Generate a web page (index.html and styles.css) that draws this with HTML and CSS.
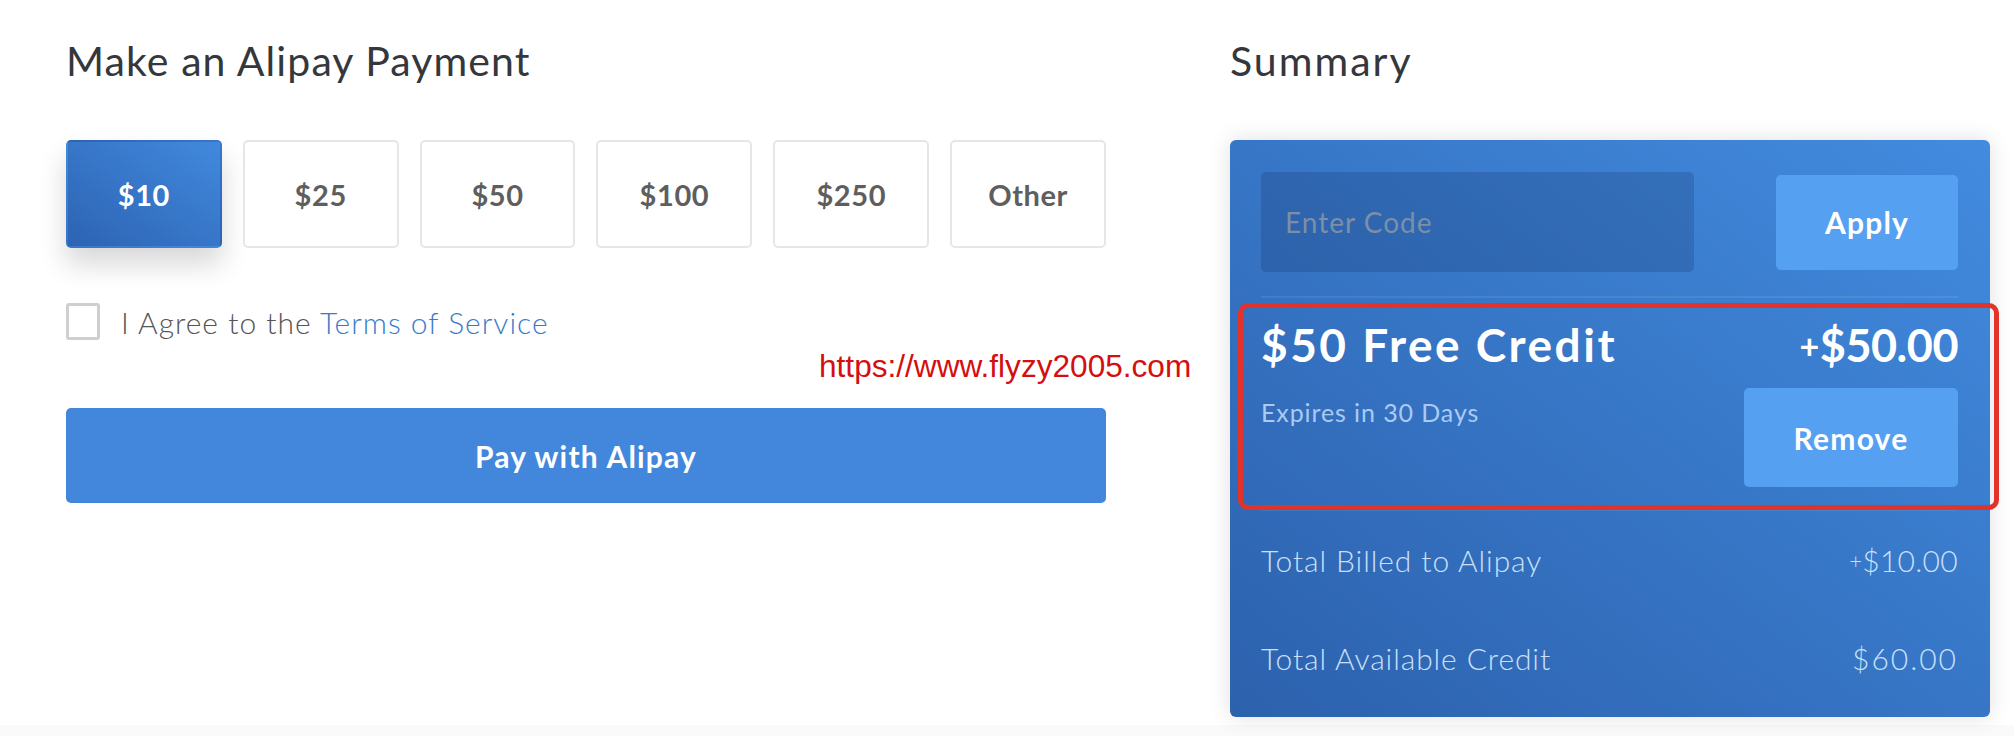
FILE: index.html
```html
<!DOCTYPE html>
<html lang="en">
<head>
<meta charset="utf-8">
<title>Make an Alipay Payment</title>
<link rel="stylesheet" href="styles.css">
</head>
<body>
<main class="page">
  <section class="pay">
    <h1 class="heading">Make an Alipay Payment</h1>
    <div class="amounts">
      <button class="amount is-active">$10</button>
      <button class="amount">$25</button>
      <button class="amount">$50</button>
      <button class="amount">$100</button>
      <button class="amount">$250</button>
      <button class="amount">Other</button>
    </div>
    <label class="agree">
      <span class="check"></span>
      <span class="agree-text">I Agree to the <a class="link" href="#">Terms of Service</a></span>
    </label>
    <span class="watermark">https://www.flyzy2005.com</span>
    <button class="pay-btn">Pay with Alipay</button>
  </section>

  <aside class="summary">
    <h2 class="heading heading-wide">Summary</h2>
    <div class="card">
      <div class="code-row">
        <div class="code-input">Enter Code</div>
        <button class="card-btn apply">Apply</button>
      </div>
      <div class="credit">
        <div class="credit-title">$50 Free Credit</div>
        <div class="credit-amount"><span class="plus">+</span>$50.00</div>
        <div class="credit-note">Expires in 30 Days</div>
        <button class="card-btn remove">Remove</button>
        <span class="highlight"></span>
      </div>
      <div class="total-row">
        <span class="total-label">Total Billed to Alipay</span>
        <span class="total-value"><span class="plus-small">+</span>$10.00</span>
      </div>
      <div class="total-row">
        <span class="total-label">Total Available Credit</span>
        <span class="total-value total-wide">$60.00</span>
      </div>
    </div>
  </aside>
</main>
<div class="footer-band"></div>
</body>
</html>
```

FILE: styles.css
```css
* { box-sizing: border-box; }

html, body {
  margin: 0;
  padding: 0;
  background: #ffffff;
  font-family: "Lato", "Open Sans", sans-serif;
}

.page {
  display: flex;
  gap: 124px;
  padding: 0 24px 8px 66px;
  height: 725px;
}

.pay {
  position: relative;
  width: 1040px;
  flex: none;
}

.summary {
  width: 760px;
  flex: none;
}

.heading {
  margin: 36px 0 55px;
  font-size: 41px;
  line-height: 49px;
  font-weight: 400;
  letter-spacing: 1.1px;
  color: #34373b;
}

.heading-wide {
  letter-spacing: 2px;
}

.amounts {
  display: grid;
  grid-template-columns: repeat(6, 1fr);
  gap: 21px;
}

.amount {
  height: 108px;
  border: 2px solid #e6e6e6;
  border-radius: 5px;
  background: #ffffff;
  color: #5e5e5e;
  font-family: inherit;
  font-size: 29px;
  font-weight: 700;
  letter-spacing: 0.6px;
  cursor: pointer;
}

.amount.is-active {
  border-color: transparent;
  color: #ffffff;
  background: linear-gradient(to top right, #2d63b3, #4189dd);
  box-shadow: 0 16px 28px rgba(0, 0, 0, 0.16);
}

.agree {
  display: flex;
  align-items: center;
  gap: 21px;
  margin-top: 55px;
  height: 37px;
}

.check {
  width: 34px;
  height: 37px;
  border: 3px solid #cfcfcf;
  border-radius: 3px;
  flex: none;
}

.agree-text {
  font-size: 30px;
  line-height: 36px;
  font-weight: 300;
  letter-spacing: 1px;
  color: #555555;
}

.link {
  color: #3a7bc8;
  text-decoration: none;
}

.watermark {
  position: absolute;
  left: 753px;
  top: 348px;
  font-family: "Liberation Sans", Arial, sans-serif;
  font-size: 31.6px;
  line-height: 36px;
  color: #d40f0f;
  white-space: nowrap;
}

.pay-btn {
  display: block;
  width: 100%;
  height: 95px;
  margin-top: 68px;
  border: 0;
  border-radius: 5px;
  background: #4287dc;
  color: #ffffff;
  font-family: inherit;
  font-size: 30px;
  font-weight: 700;
  letter-spacing: 1.2px;
}

.card {
  height: 577px;
  padding: 32px 32px 0 31px;
  border-radius: 6px;
  background: linear-gradient(to top right, #2c61ad, #428bdf);
  box-shadow: 0 0 22px rgba(0, 0, 0, 0.13);
}

.code-row {
  display: flex;
  align-items: center;
  justify-content: space-between;
  padding-bottom: 24px;
  border-bottom: 2px solid rgba(255, 255, 255, 0.08);
}

.code-input {
  width: 433px;
  height: 100px;
  padding-left: 24px;
  display: flex;
  align-items: center;
  border-radius: 5px;
  background: rgba(10, 30, 70, 0.18);
  color: #7b8fa7;
  font-size: 28px;
  font-weight: 400;
  letter-spacing: 1px;
}

.card-btn {
  border: 0;
  border-radius: 5px;
  background: #56a0f1;
  color: #ffffff;
  font-family: inherit;
  font-size: 30px;
  font-weight: 700;
  letter-spacing: 1.2px;
}

.apply {
  width: 182px;
  height: 95px;
}

.credit {
  position: relative;
  display: grid;
  grid-template-columns: 1fr auto;
  row-gap: 16px;
  padding: 21px 0 22px;
  border-bottom: 2px solid rgba(255, 255, 255, 0.07);
  color: #ffffff;
}

.credit-title {
  font-size: 46px;
  line-height: 52px;
  font-weight: 700;
  letter-spacing: 2.5px;
}

.credit-amount {
  font-size: 45px;
  line-height: 52px;
  font-weight: 700;
  letter-spacing: -0.5px;
  text-align: right;
}

.plus {
  font-size: 34px;
  vertical-align: 3px;
  margin-right: 1px;
}

.credit-note {
  align-self: start;
  margin-top: 9px;
  font-size: 25px;
  line-height: 30px;
  font-weight: 400;
  letter-spacing: 0.9px;
  color: #a9cbf3;
}

.remove {
  width: 214px;
  height: 99px;
}

.highlight {
  position: absolute;
  left: -23px;
  top: 5px;
  width: 761px;
  height: 207px;
  border: 5px solid #e2332b;
  border-radius: 10px;
  pointer-events: none;
}

.total-row {
  display: flex;
  justify-content: space-between;
  align-items: center;
  height: 98px;
  font-size: 30px;
  line-height: 36px;
  font-weight: 300;
  color: #c9e0f9;
}

.total-label {
  letter-spacing: 0.9px;
}

.total-value {
  letter-spacing: 0.3px;
}

.total-wide {
  letter-spacing: 2px;
}

.plus-small {
  font-size: 22px;
  vertical-align: 3px;
}

.footer-band {
  height: 11px;
  background: #fafafa;
}
```
